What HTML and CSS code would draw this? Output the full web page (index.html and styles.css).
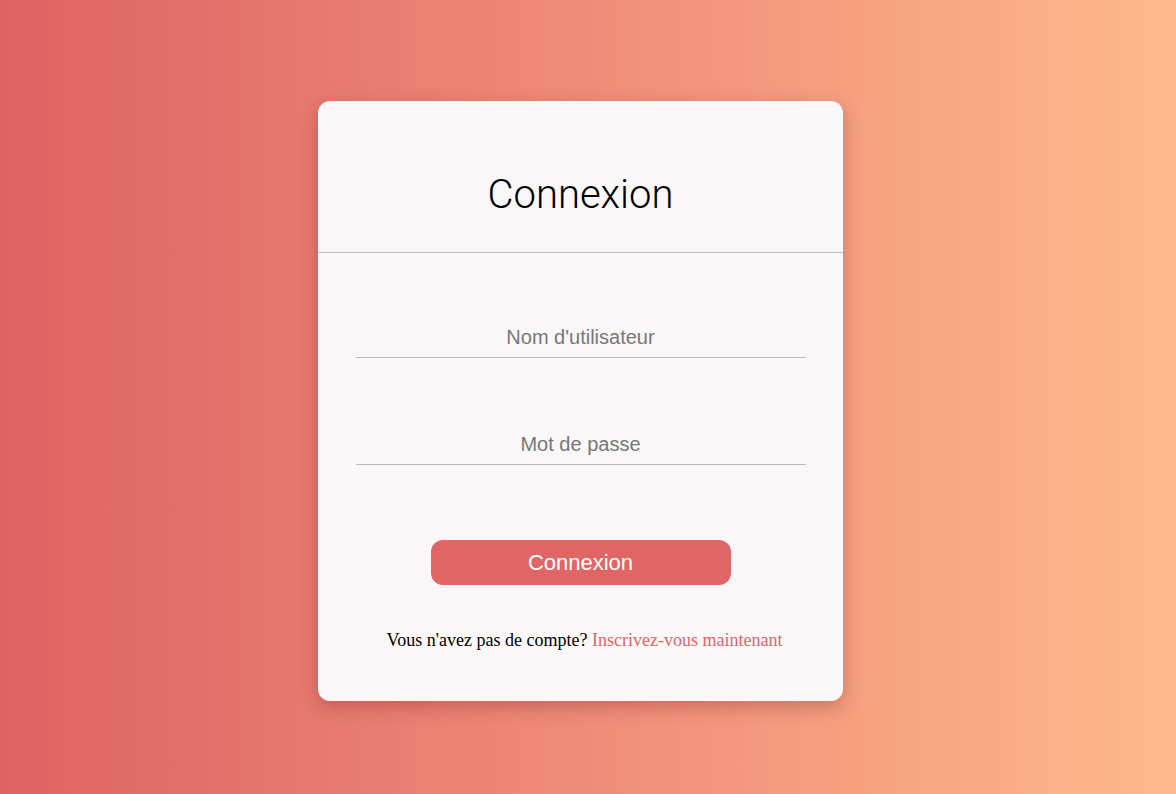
FILE: index.html
```html
<!DOCTYPE html>
<html lang="fr">
<head>
<meta charset="utf-8">
<title>Connexion</title>
<link rel="stylesheet" href="styles.css">
</head>
<body>
<main class="page">
  <section class="card">
    <header class="card-header">
      <h1 class="title">Connexion</h1>
    </header>
    <form class="form">
      <input class="field" type="text" placeholder="Nom d'utilisateur">
      <input class="field" type="password" placeholder="Mot de passe">
      <button class="btn" type="button">Connexion</button>
      <p class="signup">Vous n'avez pas de compte? <a class="signup-link" href="#">Inscrivez-vous maintenant</a></p>
    </form>
  </section>
</main>
</body>
</html>
```
FILE: styles.css
```css
html, body {
  margin: 0;
  height: 100%;
}
body {
  background: linear-gradient(to right, #de6262, #ffb88c);
  font-family: "Liberation Serif", "Times New Roman", serif;
}
.page {
  display: flex;
  justify-content: center;
  padding-top: 101px;
}
.card {
  width: 525px;
  height: 600px;
  background: #faf7f8;
  border-radius: 12px;
  box-shadow: 0 6px 18px rgba(120, 40, 40, 0.35);
  display: flex;
  flex-direction: column;
  margin-right: 15px;
}
.card-header {
  height: 151px;
  border-bottom: 1px solid #bbb;
  display: flex;
  align-items: center;
  justify-content: center;
}
.title {
  margin: 0;
  padding-top: 36px;
  font-family: Roboto, "Liberation Sans", sans-serif;
  font-weight: 300;
  font-size: 40px;
  color: #000;
}
.form {
  display: flex;
  flex-direction: column;
  align-items: center;
  padding-top: 69px;
}
.field {
  width: 450px;
  box-sizing: border-box;
  border: none;
  border-bottom: 1px solid #bbb;
  background: transparent;
  text-align: center;
  font-family: "Liberation Sans", Arial, sans-serif;
  font-size: 20px;
  color: #333;
  padding: 4px 0 8px;
  outline: none;
  margin-bottom: 71px;
}
.field::placeholder {
  color: #777;
}
.btn {
  margin-top: 4px;
  width: 300px;
  height: 45px;
  border: none;
  border-radius: 12px;
  background: #e06666;
  color: #fff;
  font-family: "Liberation Sans", Arial, sans-serif;
  font-size: 22px;
  cursor: pointer;
}
.signup {
  margin: 45px 0 0;
  padding-left: 8px;
  font-size: 18px;
  color: #000;
}
.signup-link {
  color: #e06666;
  text-decoration: none;
}
```
